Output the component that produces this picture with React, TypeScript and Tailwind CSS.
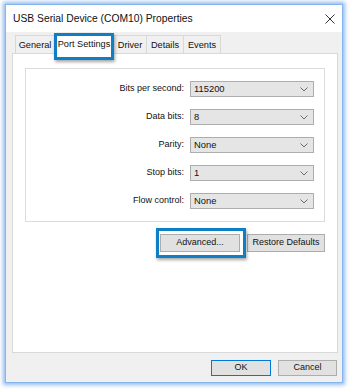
import React from "react";

const fields = [
    {label: "Bits per second:", value: "115200"},
    {label: "Data bits:", value: "8"},
    {label: "Parity:", value: "None"},
    {label: "Stop bits:", value: "1"},
    {label: "Flow control:", value: "None"},
];

const tabs = [
    {title: "General", w: "w-[40px]"},
    {title: "Port Settings", w: "w-[60px]", active: true},
    {title: "Driver", w: "w-[34px]"},
    {title: "Details", w: "w-[38px]"},
    {title: "Events", w: "w-[38px]"},
];

function Chevron() {
    return (
        <svg width="8" height="5" viewBox="0 0 8 5" className="shrink-0">
            <polyline points="0.5,0.5 4,4 7.5,0.5" fill="none" stroke="#6b6b6b" strokeWidth="1"/>
        </svg>
    );
}

function Highlight({className}: {className: string}) {
    // blue callout box drawn over the control
    return (
        <span
            className={"pointer-events-none absolute border-[3px] border-[#0e7fc4] shadow-[1px_2px_3px_rgba(0,0,0,0.35)] " + className}/>
    );
}

export default function App() {
    return (
        <div className="w-[351px] h-[391px] bg-white pt-[4px] pl-[5px] text-[#111]"
             style={{fontFamily: '"Liberation Sans", Arial, sans-serif'}}>
            <div
                className="w-[338px] h-[379px] flex flex-col bg-[#f0f0f0] border border-[#86b6ee] shadow-[0_0_4px_2px_rgba(110,165,235,0.75)]">
                {/* title bar */}
                <div className="h-[27px] shrink-0 bg-white flex items-center justify-between pl-[7px] pr-[7px]">
                    <span className="text-[10.3px]">USB Serial Device (COM10) Properties</span>
                    <svg width="10" height="10" viewBox="0 0 10 10">
                        <path d="M0.5 0.5 L9.5 9.5 M9.5 0.5 L0.5 9.5" stroke="#333" strokeWidth="1"/>
                    </svg>
                </div>

                {/* tabs */}
                <div className="h-[21px] shrink-0 flex items-end pl-[10px] text-[9.2px]">
                    {tabs.map((t) => (
                        <div key={t.title}
                             className={
                                 t.active
                                     ? "relative z-10 h-[21px] -mb-px -ml-px bg-white border border-b-0 border-[#d9d9d9] flex items-center justify-center pt-[1px] " + t.w
                                     : "h-[18px] bg-[#f0f0f0] border border-b-0 border-[#d9d9d9] -ml-px flex items-center justify-center pt-[3px] " + t.w
                             }>
                            {t.title}
                            {t.active && <Highlight className="-top-[1px] -left-[1px] -right-[1px] -bottom-[6px]"/>}
                        </div>
                    ))}
                </div>

                {/* page */}
                <div className="ml-[6px] w-[326px] h-[300px] shrink-0 bg-white border border-[#d9d9d9] pt-[14px] px-[12px]">
                    <div className="h-[154px] border border-[#dcdcdc] pt-[12px] pr-[10px] flex flex-col gap-[12px]">
                        {fields.map((f) => (
                            <div key={f.label} className="flex items-center justify-end gap-[6px] text-[9px]">
                                <span>{f.label}</span>
                                <div
                                    className="w-[124px] h-[16px] bg-[#e5e5e5] border border-[#adadad] flex items-center justify-between pl-[3px] pr-[5px]">
                                    <span className="text-[9.4px]">{f.value}</span>
                                    <Chevron/>
                                </div>
                            </div>
                        ))}
                    </div>

                    <div className="mt-[12px] flex justify-end gap-[7px] text-[9px]">
                        <div className="relative">
                            <div className="w-[80px] h-[18px] bg-[#e1e1e1] border border-[#adadad] flex items-center justify-center">
                                Advanced...
                            </div>
                            <Highlight className="-top-[6px] -left-[4px] -right-[6px] -bottom-[6px]"/>
                        </div>
                        <div className="w-[78px] h-[18px] bg-[#e1e1e1] border border-[#adadad] flex items-center justify-center">
                            Restore Defaults
                        </div>
                    </div>
                </div>

                {/* dialog buttons */}
                <div className="mt-[7px] flex justify-end gap-[7px] pr-[5px] text-[9px]">
                    <div className="w-[60px] h-[16px] bg-[#e1e1e1] border border-[#0078d7] flex items-center justify-center">
                        OK
                    </div>
                    <div className="w-[59px] h-[16px] bg-[#e1e1e1] border border-[#adadad] flex items-center justify-center">
                        Cancel
                    </div>
                </div>
            </div>
        </div>
    );
}
